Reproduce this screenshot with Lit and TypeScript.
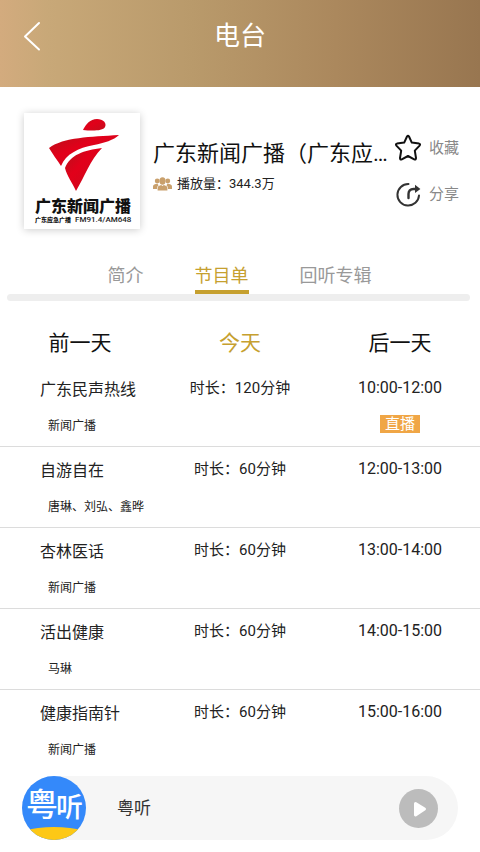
import { LitElement, html, css } from "lit";
import { customElement, property, state } from "lit/decorators.js";
import { classMap } from "lit/directives/class-map.js";

interface Programme {
  name: string;
  host: string;
  minutes: number;
  time: string;
  live?: boolean;
}

const PROGRAMMES: Programme[] = [
  { name: "广东民声热线", host: "新闻广播", minutes: 120, time: "10:00-12:00", live: true },
  { name: "自游自在", host: "唐琳、刘弘、鑫晔", minutes: 60, time: "12:00-13:00" },
  { name: "杏林医话", host: "新闻广播", minutes: 60, time: "13:00-14:00" },
  { name: "活出健康", host: "马琳", minutes: 60, time: "14:00-15:00" },
  { name: "健康指南针", host: "新闻广播", minutes: 60, time: "15:00-16:00" },
];

const resetButton = css`
  button {
    margin: 0;
    padding: 0;
    border: 0;
    background: none;
    color: inherit;
    font: inherit;
    cursor: pointer;
  }
  svg {
    display: block;
  }
`;

@customElement("station-card")
class StationCard extends LitElement {
  static styles = [
    resetButton,
    css`
      :host {
        display: flex;
        align-items: flex-start;
        padding: 26px 21px 0 24px;
      }
      .cover {
        flex: none;
        width: 116px;
        height: 116px;
        background: #fff;
        box-shadow: 0 1px 8px rgba(0, 0, 0, 0.2);
      }
      .info {
        flex: 1;
        min-width: 0;
        padding: 26px 0 0 13px;
      }
      h2 {
        margin: 0;
        font-size: 22px;
        line-height: 30px;
        font-weight: 400;
        color: #111;
        white-space: nowrap;
        overflow: hidden;
      }
      .plays {
        display: flex;
        align-items: center;
        gap: 5px;
        margin: 5px 0 0;
        font-size: 13px;
        line-height: 20px;
        color: #222;
      }
      .actions {
        flex: none;
        display: flex;
        flex-direction: column;
        gap: 18px;
        padding-top: 21px;
      }
      .actions button {
        display: flex;
        align-items: center;
        gap: 7px;
        height: 28px;
        font-size: 15px;
        line-height: 20px;
        color: #888;
      }
    `,
  ];

  render() {
    return html`
      <svg class="cover" viewBox="0 0 116 116" role="img" aria-label="广东新闻广播">
        <defs>
          <linearGradient id="red" x1="0" y1="0" x2="1" y2="1">
            <stop offset="0" stop-color="#b5121b" />
            <stop offset="0.4" stop-color="#e2001a" />
            <stop offset="1" stop-color="#c40d1c" />
          </linearGradient>
        </defs>
        <g fill="url(#red)">
          <path d="M59 17 C62 11 66 6 73 6 C79 6 83 10 81 14 C79 18 68 18 59 17Z" />
          <path d="M25 35 C40 24 66 24 95 22 C90 27 80 30 70 32 C54 35 42 41 37 53 C33 47 28 40 25 35Z" />
          <path d="M78 35 C66 47 61 63 52 78 C48 69 43 63 41 55 C46 42 60 37 78 35Z" />
        </g>
        <text x="11" y="99" font-size="16" font-weight="900" fill="#111">广东新闻广播</text>
        <text x="11" y="109" font-size="6" font-weight="900" fill="#111">广东应急广播</text>
        <text x="51" y="109" font-size="8" font-weight="500" fill="#222">FM91.4/AM648</text>
      </svg>
      <div class="info">
        <h2>广东新闻广播（广东应…</h2>
        <p class="plays">
          <svg width="19" height="14" viewBox="0 0 19 14" fill="#c9a06c" aria-hidden="true">
            <circle cx="4.2" cy="4" r="2.4" />
            <circle cx="14.8" cy="4" r="2.4" />
            <path d="M0 12 V9.6 C0 7.6 2 7 4.4 6.8 L5.6 8.2 C4.4 9 4 10 4 12Z" />
            <path d="M19 12 V9.6 C19 7.6 17 7 14.6 6.8 L13.4 8.2 C14.6 9 15 10 15 12Z" />
            <ellipse cx="9.5" cy="4" rx="3.1" ry="3.7" />
            <path d="M4.6 13.6 V11 C4.6 9 6.5 8.7 8.2 8 L9.5 9 L10.8 8 C12.5 8.7 14.4 9 14.4 11 V13.6Z" />
          </svg>
          <span>播放量：344.3万</span>
        </p>
      </div>
      <div class="actions">
        <button type="button">
          <svg width="28" height="28" viewBox="0 0 28 28" fill="none" stroke="#111" stroke-width="2" stroke-linejoin="round" aria-hidden="true">
            <path d="M13 2.5 Q14 1 15 2.5 L17.8 8.6 L25 9.6 Q26.8 10.2 25.6 11.6 L20.8 16.6 L22 24 Q22 26 20.2 25.4 L14 22 L7.8 25.4 Q6 26 6 24 L7.2 16.6 L2.4 11.6 Q1.2 10.2 3 9.6 L10.2 8.6Z" />
          </svg>
          <span>收藏</span>
        </button>
        <button type="button">
          <svg width="28" height="28" viewBox="0 0 28 28" fill="none" stroke="#333" stroke-width="2" stroke-linecap="round" aria-hidden="true">
            <path d="M14.5 4 A10.8 10.8 0 1 0 25 15.5" />
            <path d="M14.5 18 V14 Q14.5 9 19.5 9 H22" stroke-width="2.4" />
            <path d="M21 4.8 L26.4 9 L21 13Z" fill="#333" stroke="none" />
          </svg>
          <span>分享</span>
        </button>
      </div>
    `;
  }
}

@customElement("programme-table")
class ProgrammeTable extends LitElement {
  @property({ attribute: false }) programmes: Programme[] = [];

  static styles = css`
    :host {
      display: block;
    }
    table {
      width: 100%;
      table-layout: fixed;
      border-collapse: separate;
      border-spacing: 0;
      color: #222;
    }
    th,
    td {
      box-sizing: border-box;
      height: 81px;
      padding: 12px 0 0;
      border-bottom: 1px solid #dcdcdc;
      vertical-align: top;
      text-align: center;
      font-size: 15px;
      line-height: 20px;
      font-weight: 400;
    }
    tr:last-child > * {
      border-bottom-color: transparent;
    }
    th {
      padding: 12px 0 0 40px;
      text-align: left;
      white-space: nowrap;
    }
    .name {
      display: block;
      font-size: 16px;
      line-height: 24px;
    }
    .host {
      display: block;
      padding: 14px 0 0 8px;
      font-size: 12px;
      line-height: 20px;
    }
    .time {
      font-size: 16px;
    }
    .live {
      display: block;
      width: 40px;
      margin: 17px auto 0;
      background: #f0a646;
      color: #fff;
      font-size: 15px;
      line-height: 18px;
    }
  `;

  render() {
    return html`
      <table aria-label="节目单">
        <tbody>
          ${this.programmes.map(
            (p) => html`
              <tr>
                <th scope="row">
                  <span class="name">${p.name}</span>
                  <span class="host">${p.host}</span>
                </th>
                <td>时长：${p.minutes}分钟</td>
                <td class="time">
                  ${p.time}${p.live ? html`<span class="live">直播</span>` : ""}
                </td>
              </tr>
            `
          )}
        </tbody>
      </table>
    `;
  }
}

@customElement("player-bar")
class PlayerBar extends LitElement {
  static styles = [
    resetButton,
    css`
      :host {
        display: flex;
        align-items: center;
        height: 64px;
        margin: 6px 22px 12px;
        padding-right: 20px;
        box-sizing: border-box;
        border-radius: 32px;
        background: #f6f6f6;
      }
      .logo {
        flex: none;
        width: 64px;
        height: 64px;
      }
      .title {
        flex: 1;
        padding-left: 31px;
        font-size: 17px;
        line-height: 24px;
        color: #333;
      }
    `,
  ];

  render() {
    return html`
      <svg class="logo" viewBox="0 0 64 64" role="img" aria-label="粤听">
        <defs>
          <clipPath id="disc"><circle cx="32" cy="32" r="32" /></clipPath>
        </defs>
        <g clip-path="url(#disc)">
          <rect width="64" height="64" fill="#3489fa" />
          <path d="M0 55 Q32 47 64 55 V64 H0Z" fill="#fdc816" />
        </g>
        <g fill="#fff" font-weight="500">
          <text x="4" y="40" font-size="32">粤</text>
          <text x="34" y="41" font-size="27">听</text>
        </g>
      </svg>
      <span class="title">粤听</span>
      <button type="button" aria-label="播放">
        <svg width="39" height="39" viewBox="0 0 39 39" aria-hidden="true">
          <circle cx="19.5" cy="19.5" r="19.5" fill="#bcbcbc" />
          <path d="M16.5 14.5 L25.5 20 L16.5 26Z" fill="#fff" stroke="#fff" stroke-width="3" stroke-linejoin="round" />
        </svg>
      </button>
    `;
  }
}

@customElement("app-root")
class AppRoot extends LitElement {
  @state() private tab = "节目单";
  @state() private day = "今天";

  static styles = [
    resetButton,
    css`
      :host {
        display: flex;
        flex-direction: column;
        min-height: 100vh;
        background: #fff;
        font-family: Roboto, "Noto Sans CJK SC", sans-serif;
      }
      header {
        display: grid;
        grid-template-columns: 64px 1fr 64px;
        align-items: center;
        padding-bottom: 15px;
        background: linear-gradient(90deg, #d3ab7e 0%, #c8a878 10%, #b99a6b 40%, #ab885d 70%, #987650 100%);
        color: #fff;
      }
      .back {
        height: 72px;
        padding-left: 23px;
      }
      h1 {
        margin: 0;
        text-align: center;
        font-size: 26px;
        line-height: 36px;
        font-weight: 400;
      }
      .tabs {
        display: flex;
        justify-content: center;
        gap: 51px;
        margin-top: 32px;
        padding-right: 1px;
        font-size: 18px;
        line-height: 29px;
        color: #999;
      }
      .tabs button {
        border-bottom: 4px solid transparent;
      }
      .tabs .on {
        color: #c6a02f;
        border-color: #c6a02f;
      }
      .rule {
        height: 7px;
        margin: 0 10px 0 7px;
        border-radius: 4px;
        background: #eee;
      }
      .days {
        display: grid;
        grid-template-columns: repeat(3, 1fr);
        padding: 27px 0 8px;
        font-size: 21px;
        line-height: 30px;
        color: #111;
      }
      .days .on {
        color: #c6a02f;
      }
      player-bar {
        margin-top: auto;
      }
    `,
  ];

  render() {
    return html`
      <header>
        <button class="back" type="button" aria-label="返回">
          <svg width="18" height="30" viewBox="0 0 18 30" fill="none" stroke="#fff" stroke-width="2" stroke-linecap="round" stroke-linejoin="round" aria-hidden="true">
            <path d="M16 2 L2 15.5 L16 28.5" />
          </svg>
        </button>
        <h1>电台</h1>
      </header>
      <station-card></station-card>
      <nav class="tabs">
        ${["简介", "节目单", "回听专辑"].map(
          (t) => html`<button type="button" class=${classMap({ on: t === this.tab })} @click=${() => (this.tab = t)}>${t}</button>`
        )}
      </nav>
      <div class="rule"></div>
      <nav class="days">
        ${["前一天", "今天", "后一天"].map(
          (d) => html`<button type="button" class=${classMap({ on: d === this.day })} @click=${() => (this.day = d)}>${d}</button>`
        )}
      </nav>
      <programme-table .programmes=${PROGRAMMES}></programme-table>
      <player-bar></player-bar>
    `;
  }
}
